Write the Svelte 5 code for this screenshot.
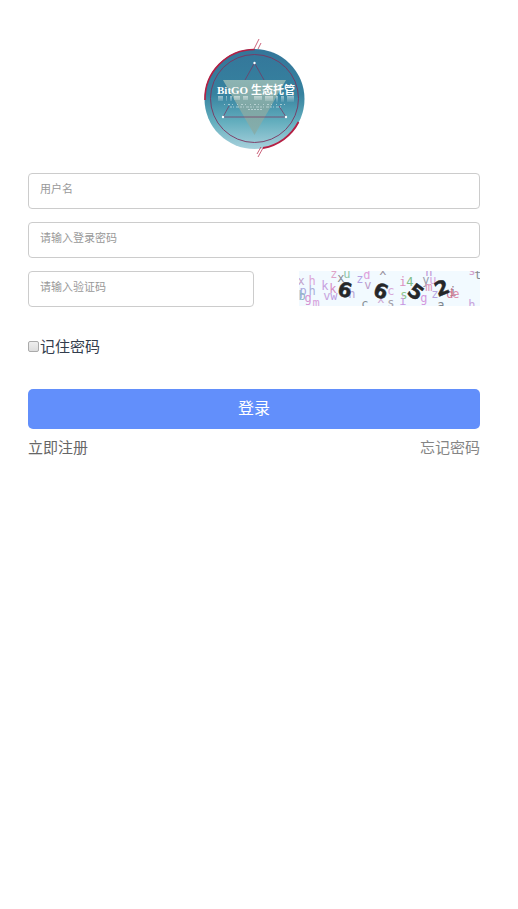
<script lang="ts">
	interface Glyph {
		char: string;
		x: number;
		y: number;
		color: string;
		angle?: number;
	}

	const digits: Glyph[] = [
		{ char: '6', x: 46, y: 19, color: '#252729', angle: 14 },
		{ char: '6', x: 82, y: 20, color: '#252729', angle: 20 },
		{ char: '5', x: 117, y: 21, color: '#252729', angle: 38 },
		{ char: '2', x: 143, y: 17, color: '#252729', angle: -22 }
	];

	const noise: Glyph[] = [
		{ char: 'x', x: 2, y: 10, color: '#c3a3cc' },
		{ char: 'h', x: 13, y: 10, color: '#dda6d8' },
		{ char: 'k', x: 26, y: 15, color: '#c7a0e0' },
		{ char: 'z', x: 35, y: 3, color: '#dfa3c8' },
		{ char: 'x', x: 42, y: 7, color: '#858b92' },
		{ char: 'u', x: 48, y: 3, color: '#8fc5a4' },
		{ char: 'p', x: 4, y: 20, color: '#aaa8dd' },
		{ char: 'h', x: 13, y: 20, color: '#abaed9' },
		{ char: 'b', x: 3, y: 25, color: '#91b7c5' },
		{ char: 'g', x: 9, y: 27, color: '#d693d2' },
		{ char: 'm', x: 17, y: 32, color: '#d9a2dc' },
		{ char: 'v', x: 28, y: 25, color: '#c6a3dd' },
		{ char: 'w', x: 35, y: 25, color: '#be9ee1' },
		{ char: 'k', x: 34, y: 18, color: '#d68cc3' },
		{ char: 'h', x: 53, y: 23, color: '#b9a5d5' },
		{ char: 'z', x: 61, y: 8, color: '#b2a2e5' },
		{ char: 'd', x: 68, y: 4, color: '#dfa0db' },
		{ char: 'v', x: 69, y: 14, color: '#bd9ac9' },
		{ char: 'x', x: 84, y: 0, color: '#9a949f' },
		{ char: 'c', x: 66, y: 33, color: '#878e94' },
		{ char: 'x', x: 82, y: 28, color: '#cfa9d5' },
		{ char: 'c', x: 92, y: 20, color: '#d8a8d8' },
		{ char: 's', x: 92, y: 32, color: '#a4a1aa' },
		{ char: 'i', x: 104, y: 11, color: '#dc91be' },
		{ char: '4', x: 111, y: 11, color: '#7fbd88' },
		{ char: 's', x: 105, y: 24, color: '#8cc78d' },
		{ char: 'i', x: 104, y: 30, color: '#c795e1' },
		{ char: 'h', x: 130, y: 1, color: '#bd93d6' },
		{ char: 'y', x: 127, y: 9, color: '#9a9cac' },
		{ char: 'u', x: 134, y: 9, color: '#d2a5df' },
		{ char: 'm', x: 130, y: 16, color: '#db93b8' },
		{ char: 'g', x: 125, y: 27, color: '#d498de' },
		{ char: 'z', x: 136, y: 23, color: '#b7a4e1' },
		{ char: 'i', x: 154, y: 21, color: '#8a7b84' },
		{ char: 'd', x: 151, y: 23, color: '#d17594' },
		{ char: 'e', x: 157, y: 23, color: '#dc91ad' },
		{ char: 'a', x: 142, y: 34, color: '#7d858c' },
		{ char: 's', x: 173, y: 0, color: '#d3a0cc' },
		{ char: 't', x: 179, y: 4, color: '#878b91' },
		{ char: 'h', x: 173, y: 34, color: '#c9a3dc' }
	];

	let username = $state('');
	let password = $state('');
	let code = $state('');
	let remember = $state(false);

	function handleSubmit(event: SubmitEvent) {
		event.preventDefault();
	}
</script>

<main class="login">
	<svg class="logo" viewBox="0 0 120 120" role="img" aria-label="BitGO 生态托管">
		<defs>
			<linearGradient id="disc" x1="0" y1="0" x2="0" y2="1">
				<stop offset="0" stop-color="#34769a" />
				<stop offset="0.45" stop-color="#36829f" />
				<stop offset="0.72" stop-color="#62adbd" />
				<stop offset="1" stop-color="#a8d1dc" />
			</linearGradient>
			<linearGradient id="wedge" x1="0" y1="0" x2="0" y2="1">
				<stop offset="0" stop-color="#8db4b3" />
				<stop offset="0.5" stop-color="#7fa7a5" />
				<stop offset="1" stop-color="#86afad" />
			</linearGradient>
			<linearGradient id="sheen" x1="0" y1="0" x2="0" y2="1">
				<stop offset="0" stop-color="#fff" stop-opacity="0.5" />
				<stop offset="1" stop-color="#fff" stop-opacity="0" />
			</linearGradient>
		</defs>
		<circle cx="60.5" cy="61" r="50" fill="url(#disc)" />
		<path d="M29 42H92L60.5 97Z" fill="url(#wedge)" />
		<g fill="none" stroke="#7d345f">
			<circle cx="60.5" cy="60.5" r="44" stroke-width="0.9" />
			<path d="M51 42L60.5 25L70 42M35 68L29 79H92L85 68" stroke-width="0.7" />
		</g>
		<g fill="none" stroke="#b51f43">
			<path d="M11 62A49.5 49.5 0 0 1 60.5 11.5" stroke-width="1.6" />
			<path d="M104.5 84A49.5 49.5 0 0 1 69 110" stroke-width="1.8" />
			<path d="M60 11L65 1M64 11L67 5M63 116L67 109M64 119L69 110" stroke-width="0.7" />
		</g>
		<g fill="#fff">
			<circle cx="60.5" cy="25" r="1.2" />
			<circle cx="29" cy="79" r="1.2" />
			<circle cx="92" cy="79" r="1.2" />
		</g>
		<path
			d="M24 58h5v5h-5zM32 58h1v5h-1zM36 58h2v5h-2zM40 58h6v4h-6zM49 58h5v4h-5zM60 58h8v4h-8zM71 58h8v5h-8zM82 58h2v7h-2zM87 58h3v6h-3zM93 58h7v6h-7z"
			fill="url(#sheen)"
		/>
		<text class="brand" x="23" y="56">BitGO 生态托管</text>
		<g fill="none" stroke="#cfe3e5" stroke-width="0.7">
			<path d="M30 66.5H91" stroke-dasharray="1 3 2 2 1 4" />
			<path d="M36 69H87" stroke-dasharray="2 1 1 2 3 1" />
			<path d="M54 71.5H68" stroke-dasharray="2 1" />
		</g>
	</svg>

	<form onsubmit={handleSubmit}>
		<input class="field" type="text" aria-label="用户名" placeholder="用户名" bind:value={username} />
		<input
			class="field"
			type="password"
			aria-label="请输入登录密码"
			placeholder="请输入登录密码"
			bind:value={password}
		/>
		<div class="code-row">
			<input
				class="field"
				type="text"
				aria-label="请输入验证码"
				placeholder="请输入验证码"
				bind:value={code}
			/>
			<button type="button" class="captcha" aria-label="验证码">
				<svg viewBox="0 0 181 35" aria-hidden="true">
					{#each noise as glyph}
						<text class="noise" x={glyph.x} y={glyph.y} dy="4" fill={glyph.color}>{glyph.char}</text>
					{/each}
					{#each digits as glyph}
						<text
							class="digit"
							x={glyph.x}
							y={glyph.y}
							dy="7"
							fill={glyph.color}
							transform="rotate({glyph.angle} {glyph.x} {glyph.y})">{glyph.char}</text
						>
					{/each}
				</svg>
			</button>
		</div>

		<label class="remember">
			<input type="checkbox" bind:checked={remember} />
			<span>记住密码</span>
		</label>

		<button type="submit" class="submit">登录</button>
	</form>

	<nav class="links">
		<a href="#register">立即注册</a>
		<a href="#forgot" class="forgot">忘记密码</a>
	</nav>
</main>

<style>
	:global(body) {
		background: #fff;
	}

	.login {
		padding: 38px 38px 24px 28px;
		font-family: 'Noto Sans CJK SC', sans-serif;
		font-size: 15px;
		color: #333d4d;
	}

	.logo {
		display: block;
		width: 120px;
		height: 120px;
		margin: 0 auto 15px;
	}

	.brand {
		font: bold 11px 'Liberation Serif', 'Noto Sans CJK SC', serif;
		fill: #fff;
	}

	form {
		display: flex;
		flex-direction: column;
		gap: 13px;
	}

	.field {
		box-sizing: border-box;
		width: 100%;
		height: 36px;
		padding: 0 11px 6px;
		border: 1px solid #ccc;
		border-radius: 4px;
		background: #fff;
		color: #333d4d;
		font-family: inherit;
		font-size: 11px;
		outline: none;
	}

	.field:focus {
		border-color: #628ffb;
	}

	.field::placeholder {
		color: #999;
		opacity: 1;
	}

	.code-row {
		display: flex;
		align-items: flex-start;
		justify-content: space-between;
	}

	.code-row .field {
		width: 50%;
	}

	.captcha {
		width: 40%;
		padding: 0;
		border: none;
		background: #f2faff;
		cursor: pointer;
	}

	.captcha svg {
		display: block;
		width: 100%;
	}

	.noise {
		font: 12px 'DejaVu Sans Mono', monospace;
		text-anchor: middle;
	}

	.digit {
		font: bold 20px 'DejaVu Sans', sans-serif;
		stroke: #252729;
		stroke-width: 0.5px;
		text-anchor: middle;
	}

	.remember {
		display: flex;
		align-items: center;
		align-self: flex-start;
		gap: 1px;
		margin: 14px 0 18px;
		line-height: 24px;
	}

	.remember input {
		appearance: none;
		box-sizing: border-box;
		width: 11px;
		height: 11px;
		margin: 0;
		border: 1px solid #aaa;
		border-radius: 2px;
		background: linear-gradient(#eee, #ddd);
	}

	.remember input:checked {
		background: #628ffb;
	}

	.submit {
		height: 40px;
		padding: 0 0 4px;
		border: none;
		border-radius: 5px;
		background: #628ffb;
		color: #fff;
		font-family: inherit;
		font-size: 16px;
		cursor: pointer;
	}

	.links {
		display: flex;
		justify-content: space-between;
		margin-top: 6px;
		line-height: 24px;
	}

	.links a {
		color: #666;
		text-decoration: none;
	}

	.links .forgot {
		color: #858585;
	}
</style>
